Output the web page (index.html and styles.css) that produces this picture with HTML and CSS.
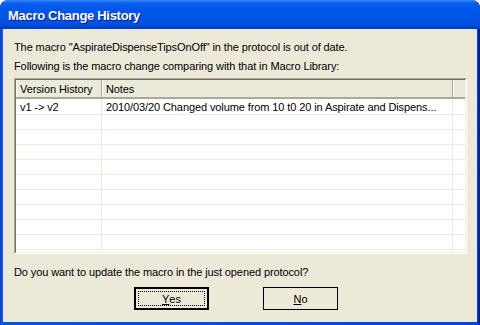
FILE: index.html
```html
<!DOCTYPE html>
<html lang="en">
<head>
    <meta charset="UTF-8">
    <meta name="viewport" content="width=device-width, initial-scale=1.0">
    <title>Macro Change History</title>
    <link rel="stylesheet" href="styles.css">
</head>
<body>
    <div class="window">
        <div class="titlebar">
            <span class="title">Macro Change History</span>
        </div>
        <div class="client">
            <p class="msg">The macro "AspirateDispenseTipsOnOff" in the protocol is out of date.</p>
            <p class="msg second">Following is the macro change comparing with that in Macro Library:</p>
            <div class="listview">
                <div class="listview-inner">
                    <div class="row header">
                        <div class="cell c1">Version History</div>
                        <div class="cell c2">Notes</div>
                        <div class="cell c3"></div>
                    </div>
                    <div class="row">
                        <div class="cell c1">v1 -&gt; v2</div>
                        <div class="cell c2">2010/03/20 Changed volume from 10 t0 20 in Aspirate and Dispens...</div>
                        <div class="cell c3"></div>
                    </div>
                    <div class="row"><div class="cell c1"></div><div class="cell c2"></div><div class="cell c3"></div></div>
                    <div class="row"><div class="cell c1"></div><div class="cell c2"></div><div class="cell c3"></div></div>
                    <div class="row"><div class="cell c1"></div><div class="cell c2"></div><div class="cell c3"></div></div>
                    <div class="row"><div class="cell c1"></div><div class="cell c2"></div><div class="cell c3"></div></div>
                    <div class="row"><div class="cell c1"></div><div class="cell c2"></div><div class="cell c3"></div></div>
                    <div class="row"><div class="cell c1"></div><div class="cell c2"></div><div class="cell c3"></div></div>
                    <div class="row"><div class="cell c1"></div><div class="cell c2"></div><div class="cell c3"></div></div>
                    <div class="row"><div class="cell c1"></div><div class="cell c2"></div><div class="cell c3"></div></div>
                    <div class="row"><div class="cell c1"></div><div class="cell c2"></div><div class="cell c3"></div></div>
                    <div class="row"><div class="cell c1"></div><div class="cell c2"></div><div class="cell c3"></div></div>
                </div>
            </div>
            <p class="msg question">Do you want to update the macro in the just opened protocol?</p>
            <div class="buttons">
                <button class="btn default"><span class="focus"><u>Y</u>es</span></button>
                <button class="btn"><u>N</u>o</button>
            </div>
        </div>
    </div>
</body>
</html>
```

FILE: styles.css
```css
body {
    margin: 0;
    padding: 0;
    background-color: #ffffff;
    font-family: 'Liberation Sans', Arial, sans-serif;
    font-size: 11px;
    letter-spacing: -0.1px;
    color: #000000;
}
.window {
    width: 480px;
    height: 325px;
    display: flex;
    flex-direction: column;
    background: linear-gradient(to right, #0831d9 0px, #1660f0 2px, #0055e5 3px, #0046d8 477px, #00138c 480px);
    border-radius: 8px 8px 0 0;
    overflow: hidden;
}
.titlebar {
    height: 29px;
    flex: none;
    display: flex;
    align-items: center;
    padding-left: 8px;
    background: linear-gradient(to bottom, #3d8cf7 0px, #2a7af5 1px, #0a60ee 3px, #0058ea 8px, #0055e5 18px, #0050df 24px, #0044d0 27px, #003cc2 29px);
}
.title {
    font-weight: bold;
    font-size: 13px;
    letter-spacing: -0.3px;
    color: #ffffff;
    text-shadow: 1px 1px 0 #0a1a8a;
    margin-top: 1px;
}
.client {
    flex: 1;
    margin: 0 3px 3px 3px;
    background-color: #ece9d8;
    padding: 11px 0 0 11px;
}
.msg {
    margin: 0;
    line-height: 14px;
    white-space: nowrap;
}
.msg.second {
    margin-top: 5px;
}
.listview {
    margin-top: 5px;
    width: 451px;
    height: 174px;
    border: 1px solid;
    border-color: #aca899 #ffffff #ffffff #aca899;
}
.listview-inner {
    height: 172px;
    border: 1px solid;
    border-color: #716f64 #f1efe2 #f1efe2 #716f64;
    background-color: #ffffff;
    overflow: hidden;
}
.row {
    display: grid;
    grid-template-columns: 86px 351px 1fr;
    height: 14px;
    border-bottom: 1px solid #eeebdc;
}
.cell {
    padding-left: 4px;
    line-height: 14px;
    white-space: nowrap;
    overflow: hidden;
}
.c1, .c2 {
    border-right: 1px solid #eeebdc;
}
.row.header {
    height: 17px;
    background-color: #ebeadb;
    border-bottom: 2px solid #aca899;
}
.row.header .cell {
    line-height: 18px;
    border-right: 1px solid #aca899;
    box-shadow: inset 1px 0 0 #ffffff;
}
.row.header .c3 {
    border-right: none;
}
.row:nth-child(2) {
    height: 15px;
}
.row:nth-child(2) .cell {
    line-height: 17px;
}
.question {
    margin-top: 11px;
}
.buttons {
    display: flex;
    gap: 54px;
    margin-top: 8px;
    padding-left: 120px;
}
.btn {
    width: 75px;
    height: 23px;
    padding: 0;
    border: 1px solid #000000;
    background-color: #ece9d8;
    font-family: 'Liberation Sans', Arial, sans-serif;
    font-size: 11px;
    color: #000000;
    display: flex;
    align-items: center;
    justify-content: center;
}
.btn.default {
    border: 2px solid #000000;
}
.focus {
    display: flex;
    align-items: center;
    justify-content: center;
    width: 65px;
    height: 13px;
    border: 1px dotted #000000;
}
```
